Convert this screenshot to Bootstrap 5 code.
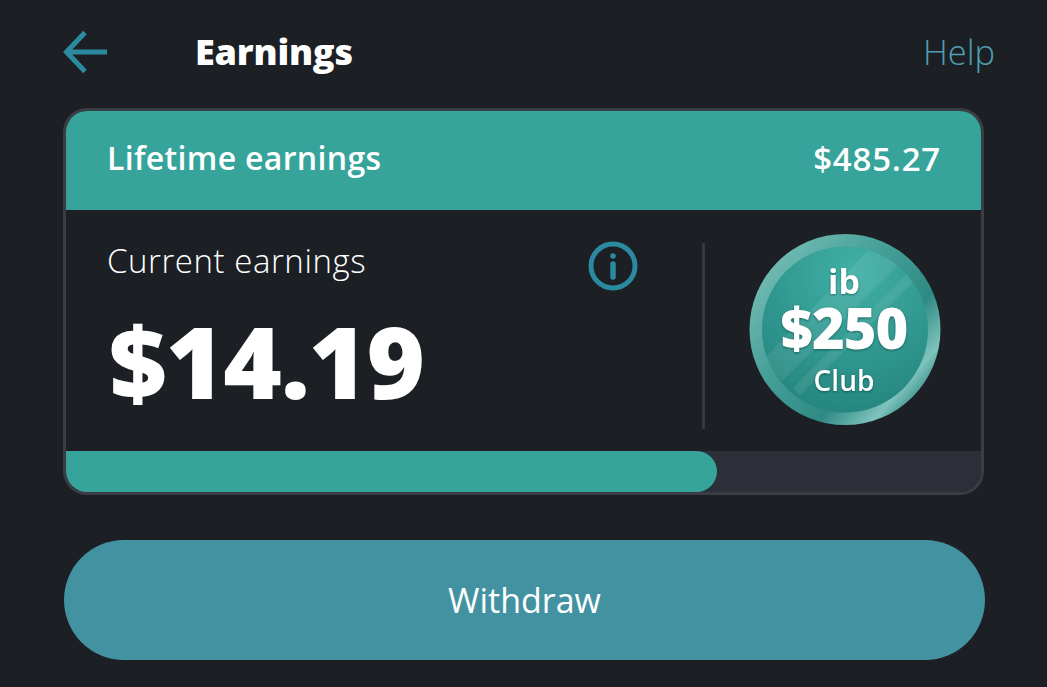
<!DOCTYPE html>
<html lang="en"><head><meta charset="utf-8"><title>Earnings</title>
<link href="https://cdn.jsdelivr.net/npm/bootstrap@5.3.0/dist/css/bootstrap.min.css" rel="stylesheet">
<style>
html,body{height:100%;overflow:hidden}
body{background:#1c1f24;color:#fff;font-family:"Open Sans","Liberation Sans",sans-serif}
.shell{padding:0 0 0 63px;width:1047px}
.cardcol{width:922px}
.topbar{height:108px;padding-bottom:4px;width:921px}
.backbtn{width:132px;line-height:0}
.pagetitle{font-size:36px;font-weight:800;letter-spacing:-.2px;margin:0;line-height:1}
.helplink{font-size:34.500px;color:#4f9fb2;text-decoration:none;line-height:1;font-weight:300;margin-right:-11px}
.earncard{height:387px;width:921px;border:3px solid #3a3d44;border-radius:24px;overflow:hidden;background:#1c1f24}
.lifebar{height:99px;background:#36a49a;padding:0 41px 4px;font-size:32px;font-weight:600;margin-bottom:2px;letter-spacing:.32px}
.lifesum{font-size:33px;letter-spacing:.8px;margin-right:-1px}
.earnbody{height:241px;padding-left:41px}
.leftcol{width:595px;padding-top:28px}
.currlabel{font-size:33px;font-weight:300;line-height:38px;letter-spacing:.55px;margin-top:2px}
.bigamount{font-size:100px;font-weight:800;line-height:1;margin-top:30px;margin-left:2px;letter-spacing:-1px}
.infoicon{margin:1px 0 0 0;line-height:0;padding-right:64px}
.vrule{width:3px;height:186px;background:#37393f;margin-top:31px}
.badgewrap{flex:1;padding:21px 0 0 43px;line-height:0}
.meter{height:41px;background:#2c2f38}
.meterfill{background:#36a49a;border-radius:0 24px 24px 0}
.withdrawbtn{margin:45px 0 0 1px;height:120px;width:921px;border-radius:60px;background:#4292a2;border:0;color:#fff;font-size:34px;font-weight:400}
.withdrawbtn:hover{background:#4292a2;color:#fff}
.badgesvg text{font-family:"Open Sans","Liberation Sans",sans-serif;fill:#fff;text-anchor:middle;filter:drop-shadow(0 1px 1px rgba(0,50,50,.55))}
</style></head>
<body>
<div class="shell"><div class="cardcol">
  <header class="topbar d-flex align-items-center">
    <a href="#" class="backbtn" aria-label="Back"><svg width="46" height="46" viewBox="0 0 46 46" fill="none" stroke="#2b8aa0" stroke-width="5"><path d="M44 23H4M22 3.500 3.500 23 22 42.500"/></svg></a>
    <h1 class="pagetitle flex-grow-1">Earnings</h1>
    <a href="#" class="helplink">Help</a>
  </header>
  <section class="earncard d-flex flex-column">
    <div class="lifebar d-flex justify-content-between align-items-center"><span>Lifetime earnings</span><span class="lifesum">$485.27</span></div>
    <div class="earnbody d-flex">
      <div class="leftcol d-flex">
        <div class="flex-grow-1">
          <div class="currlabel">Current earnings</div>
          <div class="bigamount">$14.19</div>
        </div>
        <div class="infoicon"><svg width="50" height="50" viewBox="0 0 50 50" fill="none" stroke="#2b8aa0"><circle cx="25" cy="25" r="22" stroke-width="5"/><circle cx="25" cy="15" r="2.800" fill="#2b8aa0" stroke="none"/><path d="M25 23v13" stroke-width="5.500" stroke-linecap="round"/></svg></div>
      </div>
      <div class="vrule"></div>
      <div class="badgewrap">
        <svg class="badgesvg" width="194" height="194" viewBox="0 0 194 194">
          <defs>
            <linearGradient id="ring" x1="0.100" y1="0.150" x2="0.900" y2="0.850"><stop offset="0" stop-color="#72bab4"/><stop offset=".35" stop-color="#47a199"/><stop offset=".7" stop-color="#2f8a84"/><stop offset=".9" stop-color="#7fc3bd"/><stop offset="1" stop-color="#3b918c"/></linearGradient>
            <radialGradient id="face" cx=".55" cy=".15" r=".95"><stop offset="0" stop-color="#40b0a6"/><stop offset="1" stop-color="#22817b"/></radialGradient>
            <clipPath id="faceclip"><circle cx="97" cy="97" r="83"/></clipPath>
          </defs>
          <circle cx="97" cy="96.500" r="95.500" fill="url(#ring)"/>
          <circle cx="97" cy="96.500" r="83" fill="url(#face)"/>
          <g clip-path="url(#faceclip)" fill="#fff" fill-opacity=".08">
            <path d="M125 12 150 32 34 148 14 128Z"/>
            <path d="M160 40 167 47 52 162 45 155Z"/>
          </g>
          <text x="96" y="61" font-size="34" font-weight="700">ib</text>
          <text x="96" y="116" font-size="56" font-weight="800" letter-spacing="-1">$250</text>
          <text x="96" y="158" font-size="28" font-weight="600">Club</text>
        </svg>
      </div>
    </div>
    <div class="meter d-flex"><div class="meterfill" style="width:651px"></div></div>
  </section>
  <button class="btn withdrawbtn d-block" type="button">Withdraw</button>
</div></div>
<script src="https://cdn.jsdelivr.net/npm/bootstrap@5.3.0/dist/js/bootstrap.bundle.min.js"></script>
</body></html>
